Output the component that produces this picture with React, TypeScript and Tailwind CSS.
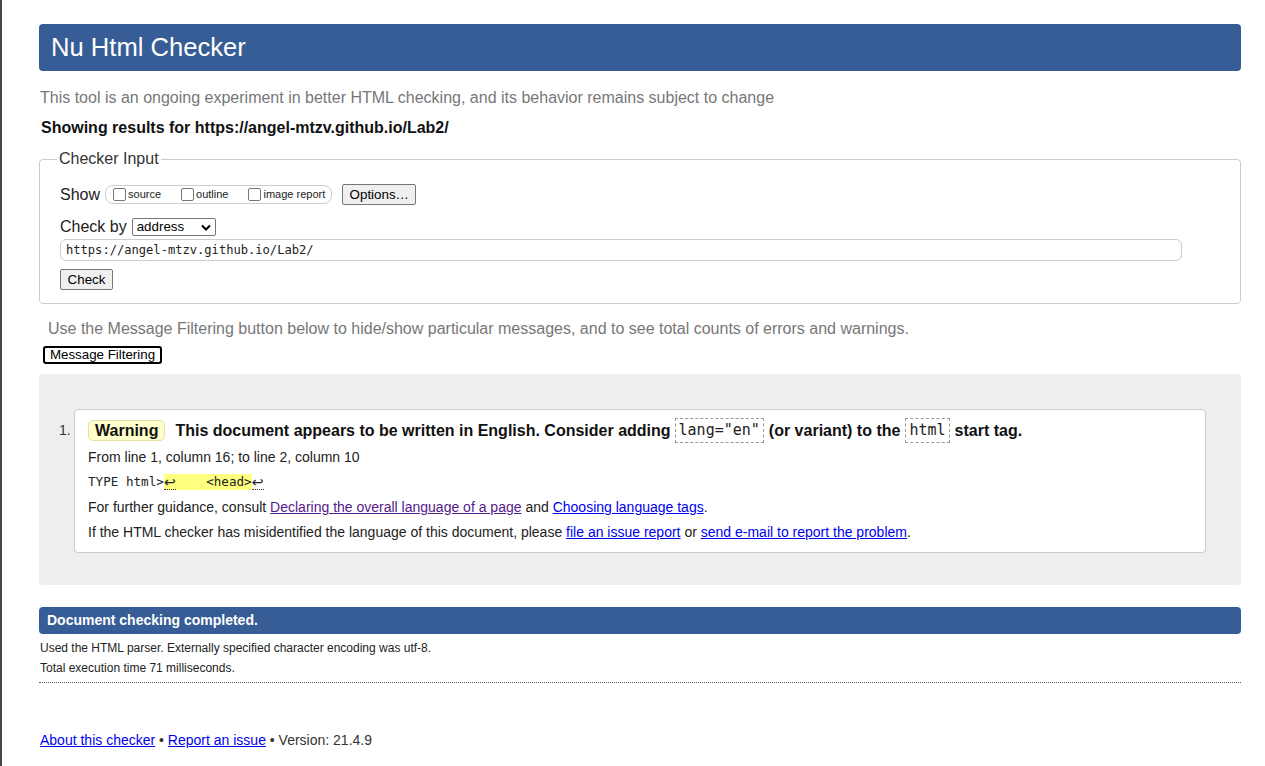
import React from "react";

function Box() {
  return <span className="inline-block w-[13px] h-[13px] border border-[#767676] rounded-[2px] bg-white shrink-0" />;
}

function Ret() {
  return (
    <span className="inline-block w-[12px] h-[15px] text-center border-b border-dotted border-[#333] font-['DejaVu_Sans',sans-serif] text-[14px] leading-[14px]">↩</span>
  );
}

export default function App() {
  return (
    <div className="min-h-[766px] border-l-2 border-[#4a4540] bg-white font-['Liberation_Sans',Arial,sans-serif] text-[#222]">
      <div className="ml-[37px] w-[1202px] pt-[24px] pb-[20px]">
        <header className="h-[47px] rounded-[4px] bg-[#365d95] pl-[12px] flex items-center text-white text-[25.6px] leading-none">
          Nu Html Checker
        </header>
        <p className="mt-[18px] text-[16px] leading-[18px] text-[#777] pl-[1px]">
          This tool is an ongoing experiment in better HTML checking, and its behavior remains subject to change
        </p>
        <p className="mt-[12px] text-[16px] leading-[18px] font-bold text-[#111] pl-[2px]">
          Showing results for https://angel-mtzv.github.io/Lab2/
        </p>

        <fieldset className="mt-[13px] border border-[#cccccc] rounded-[4px] pl-[20px] pb-[13px]">
          <legend className="ml-[-3px] px-[2px] text-[16px] leading-[18px] text-[#333]">Checker Input</legend>
          <div className="mt-[16px] flex items-center h-[21px]">
            <span className="text-[16px] leading-[18px] text-[#222]">Show</span>
            <div className="ml-[5px] flex items-center h-[19px] border border-[#cccccc] rounded-[8px] pl-[7px] pr-[6px] text-[11px] text-[#222]">
              <Box />
              <span className="ml-[2px] mr-[20px]">source</span>
              <Box />
              <span className="ml-[2px] mr-[20px]">outline</span>
              <Box />
              <span className="ml-[2px]">image report</span>
            </div>
            <button className="ml-[10px] w-[74px] h-[21px] bg-[#efefef] border border-[#767676] rounded-[2px] text-[13.33px] text-black flex items-center justify-center">
              Options…
            </button>
          </div>
          <div className="mt-[13px] flex items-center h-[18px]">
            <span className="text-[16px] leading-[18px] text-[#222]">Check by</span>
            <div className="ml-[5px] w-[84px] h-[18px] border border-[#767676] rounded-[2px] bg-white flex items-center pl-[4px] pr-[3px] text-[13.33px] text-black">
              <span className="flex-1">address</span>
              <svg width="10" height="7" viewBox="0 0 10 7" className="mr-[1px]">
                <path d="M1 1.5 L5 5.5 L9 1.5" fill="none" stroke="#000" strokeWidth="2" />
              </svg>
            </div>
          </div>
          <div className="mt-[3px] w-[1122px] h-[22px] border border-[#cccccc] rounded-[6px] flex items-center pl-[5px] font-['DejaVu_Sans_Mono',monospace] text-[12.1px] text-[#222]">
            https://angel-mtzv.github.io/Lab2/
          </div>
          <button className="mt-[8px] w-[53px] h-[21px] bg-[#efefef] border border-[#767676] rounded-[2px] text-[13.33px] text-black flex items-center justify-center">
            Check
          </button>
        </fieldset>

        <p className="mt-[16px] pl-[9px] text-[16px] leading-[18px] text-[#777]">
          Use the Message Filtering button below to hide/show particular messages, and to see total counts of errors and warnings.
        </p>
        <button className="mt-[8px] ml-[4px] w-[119px] h-[18px] border-2 border-black rounded-[3px] bg-white text-[13.33px] leading-[14px] text-black flex items-center justify-center">
          Message Filtering
        </button>

        <div className="mt-[10px] bg-[#eeeeee] rounded-[4px] pt-[35px] pb-[32px] pl-[20px] pr-[35px] flex items-start">
          <span className="w-[15px] mt-[13px] text-[14px] leading-[16px] text-[#333]">1.</span>
          <div className="flex-1 bg-white border border-[#cccccc] rounded-[4px] pt-[8px] pb-[12px] pl-[13px]">
            <div className="flex items-center h-[25px] text-[16px] font-bold text-[#111] whitespace-nowrap">
              <span className="h-[21px] flex items-center px-[6px] bg-[#ffffcc] border border-[#e6e0a8] rounded-[5px]">Warning</span>
              <span className="ml-[10px]">This document appears to be written in English. Consider adding</span>
              <code className="ml-[4px] h-[25px] flex items-center px-[3px] border border-dashed border-[#999] font-['DejaVu_Sans_Mono',monospace] font-normal text-[15px] text-[#222]">lang="en"</code>
              <span className="ml-[5px]">(or variant) to the</span>
              <code className="ml-[5px] h-[25px] flex items-center px-[3px] border border-dashed border-[#999] font-['DejaVu_Sans_Mono',monospace] font-normal text-[15px] text-[#222]">html</code>
              <span className="ml-[5px]">start tag.</span>
            </div>
            <p className="mt-[6px] text-[14px] leading-[16px]">From line 1, column 16; to line 2, column 10</p>
            <p className="mt-[9px] h-[16px] flex items-center font-['DejaVu_Sans_Mono',monospace] text-[12.6px] leading-[16px] text-[#222] whitespace-pre">
              <span>TYPE html&gt;</span>
              <span className="bg-[#ffff80] flex items-center h-[16px]">
                <Ret />
                <span>{"    <head>"}</span>
              </span>
              <Ret />
            </p>
            <p className="mt-[9px] text-[14px] leading-[16px]">
              For further guidance, consult{" "}
              <a className="text-[#551a8b] underline" href="#">Declaring the overall language of a page</a> and{" "}
              <a className="text-[#0000ee] underline" href="#">Choosing language tags</a>.
            </p>
            <p className="mt-[9px] text-[14px] leading-[16px]">
              If the HTML checker has misidentified the language of this document, please{" "}
              <a className="text-[#0000ee] underline" href="#">file an issue report</a> or{" "}
              <a className="text-[#0000ee] underline" href="#">send e-mail to report the problem</a>.
            </p>
          </div>
        </div>

        <div className="mt-[22px] h-[27px] rounded-[4px] bg-[#365d95] flex items-center pl-[8px] text-white text-[14px] font-bold">
          Document checking completed.
        </div>
        <p className="mt-[4px] pl-[1px] text-[12px] leading-[20px] text-[#222]">
          Used the HTML parser. Externally specified character encoding was utf-8.
        </p>
        <p className="pl-[1px] text-[12px] leading-[20px] text-[#222]">Total execution time 71 milliseconds.</p>
        <div className="mt-[4px] border-t border-dotted border-[#555]" />

        <p className="mt-[49px] pl-[1px] text-[14px] leading-[16px] text-[#333]">
          <a className="text-[#0000ee] underline" href="#">About this checker</a> •{" "}
          <a className="text-[#0000ee] underline" href="#">Report an issue</a> • Version: 21.4.9
        </p>
      </div>
    </div>
  );
}
